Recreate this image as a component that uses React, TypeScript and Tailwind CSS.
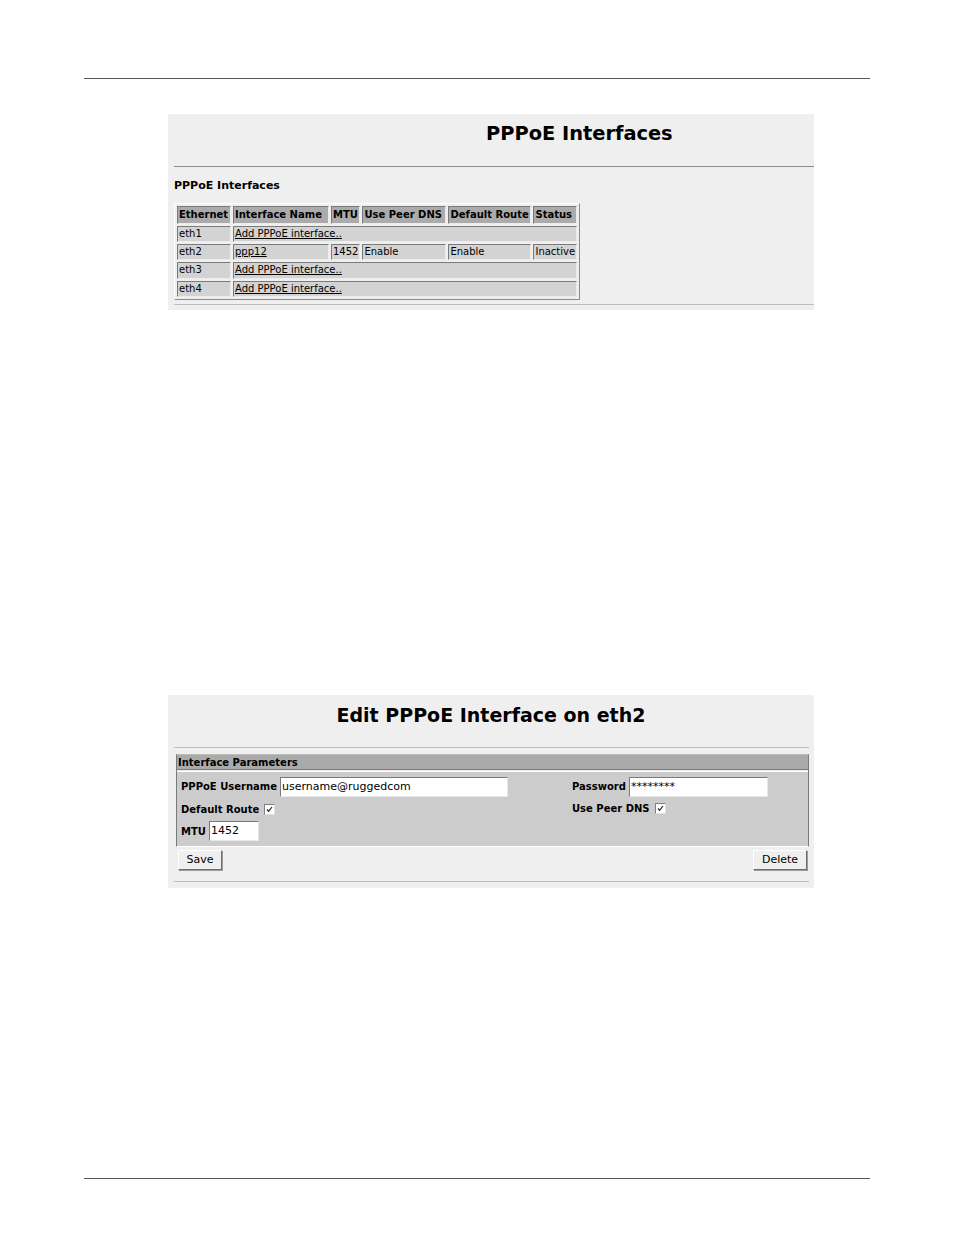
import React from 'react';

const font = "font-['DejaVu_Sans',Verdana,sans-serif]";

const cell =
  'border border-t-[#7a7a7a] border-l-[#7a7a7a] border-r-[#ececec] border-b-[#ececec] px-[1px] h-[16.2px] leading-[14px] whitespace-nowrap';

function Check() {
  return (
    <span className="inline-flex items-center justify-center w-[11px] h-[11px] bg-white border border-t-[#808080] border-l-[#808080] border-r-[#e0e0e0] border-b-[#e0e0e0] align-middle">
      <svg viewBox="0 0 9 9" className="w-[9px] h-[9px]">
        <path d="M2 4.5 L3.6 6.4 L7 2" fill="none" stroke="#222" strokeWidth="1.2" />
      </svg>
    </span>
  );
}

function Field({ value, width }: { value: string; width: string }) {
  return (
    <span
      className={`inline-block ${width} h-[20px] bg-white border border-t-[#7a7a7a] border-l-[#7a7a7a] border-r-[#e8e8e8] border-b-[#e8e8e8] px-[1px] font-normal text-[11px] leading-[18px] text-black align-middle overflow-hidden whitespace-nowrap`}
    >
      {value}
    </span>
  );
}

function Button({ label, width }: { label: string; width: string }) {
  return (
    <button
      type="button"
      className={`${width} h-[20px] bg-[#efefef] border border-t-[#ffffff] border-l-[#ffffff] border-r-[#6e6e6e] border-b-[#6e6e6e] shadow-[1px_1px_0_#9a9a9a] text-[11px] leading-[16px] text-black`}
    >
      {label}
    </button>
  );
}

const rows = [
  { eth: 'eth1', name: 'Add PPPoE interface..' },
  { eth: 'eth2', name: 'ppp12', mtu: '1452', dns: 'Enable', route: 'Enable', status: 'Inactive' },
  { eth: 'eth3', name: 'Add PPPoE interface..' },
  { eth: 'eth4', name: 'Add PPPoE interface..' },
];

export default function App() {
  return (
    <div className={`w-[954px] h-[1235px] bg-white text-black ${font}`}>
      <div className="pt-[78px] px-[84px]">
        <div className="h-px bg-[#555555]" />
      </div>

      {/* PPPoE Interfaces list */}
      <div className="mt-[35px] ml-[168px] w-[646px] bg-[#efefef] pb-[5px]">
        <div className="h-[52px] pt-[8px] pl-[318px]">
          <h1 className="text-[19.4px] leading-[24px] font-bold">PPPoE Interfaces</h1>
        </div>
        <div className="ml-[6px] h-px bg-[#8c8c8c]" />
        <p className="mt-[12px] ml-[6px] text-[11px] leading-[14px] font-bold">PPPoE Interfaces</p>
        <table className="mt-[10px] ml-[6px] border-separate border-spacing-[2px] border border-t-[#ffffff] border-l-[#ffffff] border-r-[#8a8a8a] border-b-[#8a8a8a] text-[10px] text-left">
          <thead>
            <tr className="bg-[#ababab] font-bold">
              <th className={`${cell} !h-[18px] w-[54px]`}>Ethernet</th>
              <th className={`${cell} !h-[18px] w-[96px]`}>Interface Name</th>
              <th className={`${cell} !h-[18px] w-[29px]`}>MTU</th>
              <th className={`${cell} !h-[18px] w-[84px]`}>Use Peer DNS</th>
              <th className={`${cell} !h-[18px] w-[83px]`}>Default Route</th>
              <th className={`${cell} !h-[18px] w-[43px]`}>Status</th>
            </tr>
          </thead>
          <tbody>
            {rows.map((r) => (
              <tr key={r.eth} className="bg-[#d3d3d3] font-normal">
                <td className={cell}>{r.eth}</td>
                {r.mtu ? (
                  <>
                    <td className={cell}>
                      <a className="underline">{r.name}</a>
                    </td>
                    <td className={cell}>{r.mtu}</td>
                    <td className={cell}>{r.dns}</td>
                    <td className={cell}>{r.route}</td>
                    <td className={cell}>{r.status}</td>
                  </>
                ) : (
                  <td className={cell} colSpan={5}>
                    <a className="underline">{r.name}</a>
                  </td>
                )}
              </tr>
            ))}
          </tbody>
        </table>
        <div className="mt-[4px] ml-[6px] h-px bg-[#bdbdbd]" />
      </div>

      {/* Edit form */}
      <div className="mt-[385px] ml-[168px] w-[646px] bg-[#efefef] pb-[6px]">
        <div className="h-[52px] pt-[8px] text-center">
          <h1 className="text-[19px] leading-[24px] font-bold">Edit PPPoE Interface on eth2</h1>
        </div>
        <div className="ml-[6px] mr-[5px] h-px bg-[#bdbdbd]" />

        <div className="mt-[6px] ml-[8px] w-[633px] border border-t-[#bdbdbd] border-l-[#7a7a7a] border-r-[#7a7a7a] border-b-[#ffffff]">
          <div className="bg-[#aaaaaa] h-[15px] px-[1px] text-[10px] leading-[16px] font-bold border-b border-b-[#7a7a7a]">
            Interface Parameters
          </div>
          <div className="mt-[1px] bg-[#cccccc] border-t border-t-[#ffffff] pl-[4px] pt-[4px] pb-[4px] text-[10px] font-bold">
            <div className="grid grid-cols-[391px_1fr] items-center">
              <div className="h-[22px] flex items-center gap-[3px]">
                <span>PPPoE Username</span>
                <Field value="username@ruggedcom" width="w-[228px]" />
              </div>
              <div className="h-[22px] flex items-center gap-[3px]">
                <span>Password</span>
                <Field value="********" width="w-[139px]" />
              </div>
              <div className="h-[23px] flex items-center gap-[5px]">
                <span>Default Route</span>
                <Check />
              </div>
              <div className="h-[23px] flex items-center gap-[5px] -mt-[2px]">
                <span>Use Peer DNS</span>
                <Check />
              </div>
              <div className="h-[21px] flex items-center gap-[3px]">
                <span>MTU</span>
                <Field value="1452" width="w-[50px]" />
              </div>
            </div>
          </div>
        </div>

        <div className="mt-[3px] ml-[10px] mr-[7px] flex justify-between">
          <Button label="Save" width="w-[44px]" />
          <Button label="Delete" width="w-[54px]" />
        </div>
        <div className="mt-[11px] ml-[6px] mr-[5px] h-px bg-[#bdbdbd]" />
      </div>

      <div className="mt-[290px] px-[84px]">
        <div className="h-px bg-[#555555]" />
      </div>
    </div>
  );
}
